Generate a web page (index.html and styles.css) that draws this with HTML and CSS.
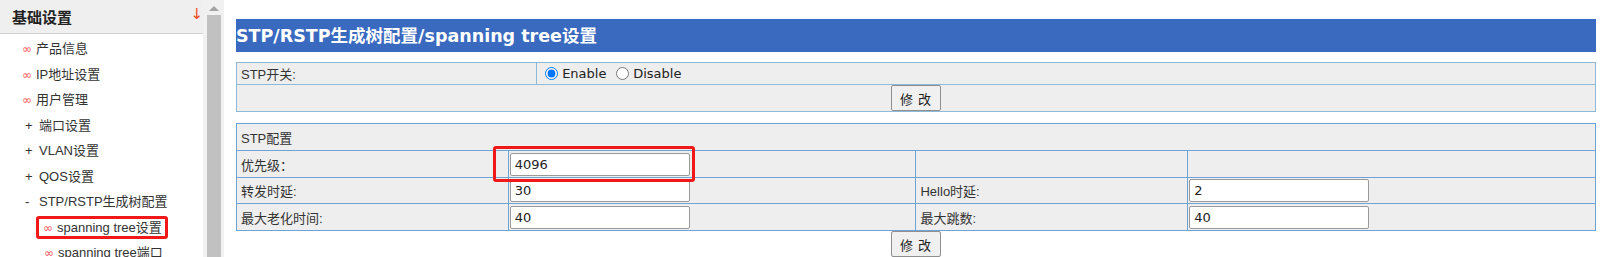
FILE: index.html
```html
<!DOCTYPE html>
<html lang="zh-CN">
<head>
  <meta charset="UTF-8" />
  <title>STP/RSTP生成树配置</title>
  <link rel="stylesheet" href="styles.css">
</head>
<body>
  <div class="frame">
    <div class="sidebar">
      <div class="side-head">
        <span>基础设置</span>
        <span class="side-arrow">↓</span>
      </div>
      <ul class="menu">
        <li class="leaf"><span class="mark">∞</span>产品信息</li>
        <li class="leaf"><span class="mark">∞</span>IP地址设置</li>
        <li class="leaf"><span class="mark">∞</span>用户管理</li>
        <li class="group"><span class="sign">+</span>端口设置</li>
        <li class="group"><span class="sign">+</span>VLAN设置</li>
        <li class="group"><span class="sign">+</span>QOS设置</li>
        <li class="group"><span class="sign">-</span>STP/RSTP生成树配置</li>
        <li class="sub"><span class="hilite"><span class="mark">∞</span>spanning tree设置</span></li>
        <li class="sub"><span class="mark">∞</span>spanning tree端口</li>
      </ul>
    </div>
    <div class="scrollbar">
      <div class="scroll-up"></div>
      <div class="scroll-thumb"></div>
    </div>

    <div class="main">
      <h2 class="title">STP/RSTP生成树配置/spanning tree设置</h2>

      <table class="grid switch">
        <tr class="row-a">
          <td class="c-label">STP开关:</td>
          <td>
            <label class="radio"><input type="radio" name="stp" checked> Enable</label>
            <label class="radio"><input type="radio" name="stp"> Disable</label>
          </td>
        </tr>
        <tr class="row-b">
          <td colspan="2" class="center"><button class="btn">修 改</button></td>
        </tr>
      </table>

      <table class="grid config">
        <colgroup>
          <col class="w20"><col class="w30"><col class="w20"><col class="w30">
        </colgroup>
        <tr class="row-h">
          <td colspan="4">STP配置</td>
        </tr>
        <tr class="row-i">
          <td>优先级：</td>
          <td class="mark-cell">
            <input class="field" type="text" value="4096">
            <span class="annot"></span>
          </td>
          <td></td>
          <td></td>
        </tr>
        <tr class="row-j">
          <td>转发时延:</td>
          <td><input class="field" type="text" value="30"></td>
          <td>Hello时延:</td>
          <td><input class="field" type="text" value="2"></td>
        </tr>
        <tr class="row-i">
          <td>最大老化时间:</td>
          <td><input class="field" type="text" value="40"></td>
          <td>最大跳数:</td>
          <td><input class="field" type="text" value="40"></td>
        </tr>
      </table>
      <div class="center">
        <button class="btn">修 改</button>
      </div>
    </div>
  </div>
</body>
</html>
```

FILE: styles.css
```css
body {
  margin: 0;
  font-family: "Liberation Sans", "Noto Sans CJK SC", sans-serif;
  font-size: 13px;
  color: #333;
  background: #fff;
  overflow: hidden;
}
.frame {
  display: flex;
  height: 257px;
}
.sidebar {
  width: 203px;
  flex-shrink: 0;
}
.side-head {
  height: 33px;
  background: #efefef;
  border-bottom: 1px solid #d0d0d0;
  display: flex;
  align-items: center;
  justify-content: space-between;
  padding: 0 0 0 12px;
  font-size: 15px;
  font-weight: bold;
  color: #222;
}
.side-arrow {
  color: #f04a1a;
  font-weight: normal;
  font-size: 15px;
  margin-top: -6px;
  font-family: "DejaVu Sans", sans-serif;
}
.menu {
  list-style: none;
  margin: 0;
  padding: 2px 0 0 0;
}
.menu li {
  height: 25.5px;
  line-height: 25.5px;
  white-space: nowrap;
}
.mark {
  color: #f25c5c;
  font-size: 12px;
  font-family: "DejaVu Sans", sans-serif;
  margin-right: 4px;
}
.leaf {
  padding-left: 22px;
}
.group {
  padding-left: 25px;
}
.sign {
  display: inline-block;
  width: 14px;
}
.sub {
  padding-left: 44px;
}
.hilite {
  border: 3px solid #f01818;
  border-radius: 3px;
  padding: 1px 3px 1px 4px;
  margin-left: -8px;
}
.scrollbar {
  width: 21px;
  background: #f1f1f1;
  flex-shrink: 0;
  display: flex;
  flex-direction: column;
  align-items: center;
}
.scroll-up {
  width: 0;
  height: 0;
  margin: 6px 0 4px;
  border-left: 5px solid transparent;
  border-right: 5px solid transparent;
  border-bottom: 5px solid #a3a3a3;
}
.scroll-thumb {
  width: 14px;
  flex: 1;
  background: #c1c1c1;
}
.main {
  flex: 1;
  padding: 19px 4px 0 12px;
}
.title {
  margin: 0;
  height: 33px;
  line-height: 34px;
  background: #3a6abf;
  color: #fff;
  font-family: "DejaVu Sans", "Noto Sans CJK SC", sans-serif;
  font-size: 17.5px;
  font-weight: bold;
  white-space: nowrap;
}
.grid {
  width: 100%;
  border-collapse: collapse;
  table-layout: fixed;
  background: #eeeeee;
}
.grid td {
  border: 1px solid #8fbad6;
  padding: 0 0 0 4px;
  white-space: nowrap;
}
.switch {
  margin-top: 10px;
  border: 1px solid #9cc3da;
}
.switch .c-label {
  width: 295px;
}
.row-a td {
  height: 21px;
}
.row-b td {
  height: 25px;
  padding: 0;
}
.config {
  margin-top: 11px;
}
.config td {
  border-color: #6fa3d3;
}
.w20 { width: 20%; }
.w30 { width: 30%; }
.row-h td {
  height: 26px;
}
.row-i td {
  height: 26px;
}
.row-j td {
  height: 25px;
}
.config td:nth-child(2),
.config td:nth-child(4) {
  padding-left: 1px;
}
.center {
  text-align: center;
}
.radio {
  font-family: "DejaVu Sans", sans-serif;
  font-size: 13px;
  color: #222;
  margin-right: 2px;
}
.radio input {
  margin: 0 0 0 4px;
  width: 13px;
  height: 13px;
  vertical-align: -2px;
}
.btn {
  width: 50px;
  height: 26px;
  padding: 0;
  font-family: "Noto Sans CJK SC", sans-serif;
  font-size: 13px;
  letter-spacing: 1px;
  color: #222;
  background: #f0f0f0;
  border: 1px solid #8f8f8f;
  border-radius: 2px;
  vertical-align: middle;
}
.field {
  box-sizing: border-box;
  width: 180px;
  height: 23px;
  padding: 0 4px;
  border: 1px solid #9a9a9a;
  border-radius: 2px;
  font-family: "DejaVu Sans", sans-serif;
  font-size: 13px;
  color: #222;
  vertical-align: middle;
}
.mark-cell {
  position: relative;
}
.annot {
  position: absolute;
  left: -16px;
  top: -5px;
  width: 196px;
  height: 30px;
  border: 3px solid #f01818;
  border-radius: 3px;
}
```
